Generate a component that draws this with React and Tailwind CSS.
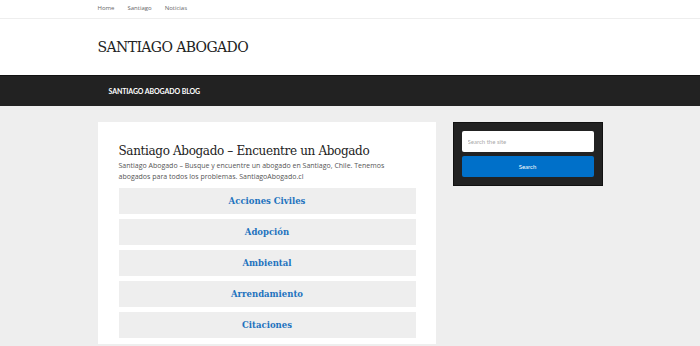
import React from 'react';

const topLinks = ['Home', 'Santiago', 'Noticias'];

const areas = ['Acciones Civiles', 'Adopción', 'Ambiental', 'Arrendamiento', 'Citaciones'];

const sans = { fontFamily: 'Lato, "Open Sans", sans-serif' };
const body = { fontFamily: '"Open Sans", Lato, sans-serif' };
const slab = { fontFamily: '"DejaVu Serif", serif' };

const App = () => {
  return (
    <div className="min-h-screen bg-[#eeeeee]" style={sans}>
      <div className="bg-white border-b border-[#eeeeee]">
        <nav className="w-[505px] mx-auto h-[18px] flex items-center gap-[13px] text-[6px] text-[#666] pb-[2px]" style={body}>
          {topLinks.map((label) => (
            <a key={label} href="#" className="hover:text-[#1e73be]">
              {label}
            </a>
          ))}
        </nav>
      </div>

      <header className="bg-white h-[56px]">
        <div className="w-[505px] mx-auto pt-[21px]">
          <h1 className="text-[14px] leading-none text-[#222] tracking-[-0.6px]" style={slab}>
            SANTIAGO ABOGADO
          </h1>
        </div>
      </header>

      <div className="bg-[#222] border-t border-[#111] h-[31px]">
        <div className="w-[505px] mx-auto h-full flex items-center pl-[11px]">
          <span className="text-white font-bold text-[7px] tracking-[-0.1px]">SANTIAGO ABOGADO BLOG</span>
        </div>
      </div>

      <main className="w-[505px] mx-auto pt-[16px] flex gap-[17px] items-start">
        <article className="w-[338px] bg-white pl-[21px] pr-[20px] pt-[22px] pb-[6px]">
          <h2 className="text-[12px] leading-[15px] text-[#222] tracking-[-0.35px]" style={slab}>
            Santiago Abogado – Encuentre un Abogado
          </h2>
          <p className="text-[7px] leading-[11px] text-[#555] mt-[1px] pr-[20px]" style={body}>
            Santiago Abogado – Busque y encuentre un abogado en Santiago, Chile. Tenemos abogados para todos los problemas. SantiagoAbogado.cl
          </p>
          <div className="mt-[6px] flex flex-col gap-[5px]">
            {areas.map((area) => (
              <a
                key={area}
                href="#"
                className="h-[26px] bg-[#eeeeee] flex items-center justify-center text-[#1e73be] font-bold text-[8.5px]"
                style={slab}
              >
                {area}
              </a>
            ))}
          </div>
        </article>

        <aside className="w-[150px] bg-[#222] border border-[#111] p-[8px] flex flex-col gap-[4px]">
          <input
            type="text"
            placeholder="Search the site"
            className="h-[21px] bg-white rounded-[2px] px-[6px] text-[6px] text-[#333] placeholder:text-[#aaa] outline-none"
            style={sans}
          />
          <button type="button" className="h-[21px] bg-[#0070c9] rounded-[2px] text-white text-[6px]" style={sans}>
            Search
          </button>
        </aside>
      </main>
    </div>
  );
};

export default App;
